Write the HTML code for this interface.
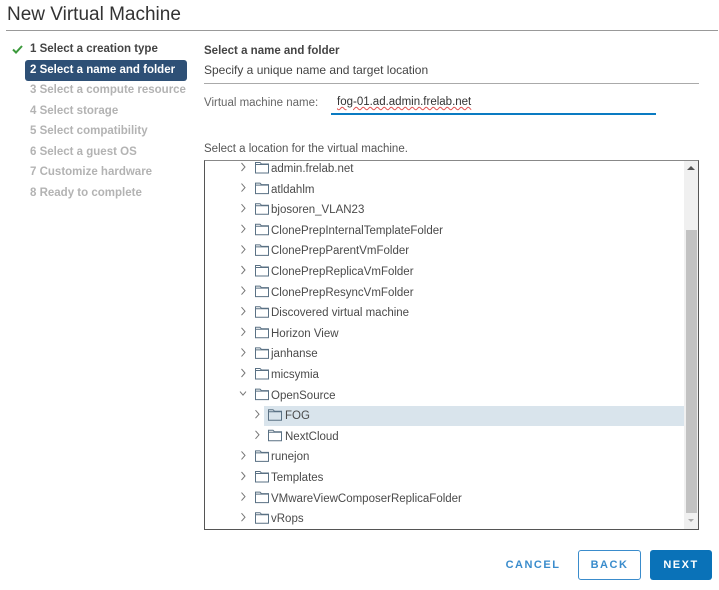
<html><head><style>
body{margin:0;width:719px;height:590px;background:#fff;font-family:"Liberation Sans",sans-serif;position:relative;overflow:hidden;color:#565656}
.a{position:absolute;white-space:nowrap}
.step{position:absolute;left:30px;font-size:11.5px;font-weight:bold;color:#b3b3b3}
.row{position:absolute;height:20px;font-size:11.5px;color:#4a4a4a;line-height:20px}
.btn{position:absolute;top:550px;height:30px;font-size:11px;font-weight:bold;letter-spacing:1.5px;line-height:30px;text-align:center;border-radius:3px}
</style></head><body>
<div class="a" style="left:7px;top:4px;font-size:19px;color:#333">New Virtual Machine</div>
<div class="a" style="left:6px;top:30px;width:712px;height:1px;background:#999"></div>
<svg class="a" style="left:12px;top:45px" width="11" height="9"><path d="M1 4.5L4 7.5L10 1" stroke="#3c9a3c" stroke-width="2" fill="none"/></svg>
<div class="step" style="top:43px;color:#444">1 Select a creation type</div>
<div class="a" style="left:25px;top:60px;width:162px;height:21px;background:#2e5076;border-radius:3px"></div>
<div class="step" style="top:64px;color:#fff">2 Select a name and folder</div>
<div class="step" style="top:84px">3 Select a compute resource</div>
<div class="step" style="top:105px">4 Select storage</div>
<div class="step" style="top:125px">5 Select compatibility</div>
<div class="step" style="top:146px">6 Select a guest OS</div>
<div class="step" style="top:166px">7 Customize hardware</div>
<div class="step" style="top:187px">8 Ready to complete</div>
<div class="a" style="left:204px;top:45px;font-size:11.5px;font-weight:bold;color:#444">Select a name and folder</div>
<div class="a" style="left:204px;top:63px;font-size:12px;color:#444">Specify a unique name and target location</div>
<div class="a" style="left:204px;top:83px;width:495px;height:1px;background:#aaa"></div>
<div class="a" style="left:204px;top:97px;font-size:11.5px;color:#666">Virtual machine name:</div>
<div class="a" style="left:337px;top:96px;font-size:11.5px;color:#333;text-decoration:underline wavy #e05050;text-decoration-thickness:1px">fog-01.ad.admin.frelab.net</div>
<div class="a" style="left:331px;top:113px;width:325px;height:2px;background:#0a7bc2"></div>
<div class="a" style="left:204px;top:143px;font-size:11.5px;color:#555">Select a location for the virtual machine.</div>
<div class="a" style="left:204px;top:160px;width:493px;height:368px;border:1px solid #555;border-top-color:#888;overflow:hidden">
<div class="a" style="left:479px;top:0;width:14px;height:368px;background:#f0f0f0"></div>
<div class="a" style="left:481px;top:69px;width:11px;height:283px;background:#c2c2c2"></div>
<div class="a" style="left:482px;top:5px;width:0;height:0;border:4px solid transparent;border-bottom:4px solid #555;border-top:0"></div>
<div class="a" style="left:483px;top:358px;width:0;height:0;border:3px solid transparent;border-top:3px solid #aaa;border-bottom:0"></div>
<div class="a" style="left:59px;top:245px;width:420px;height:20px;background:#d9e4ec"></div>
<svg class="a" style="left:0;top:0" width="480" height="368" fill="none" stroke="#777" stroke-width="1">
<g id="rows"></g>
</svg>
</div>
<div id="tree"></div>
<div class="btn" style="left:497px;width:72px;color:#3a8ccc">CANCEL</div>
<div class="btn" style="left:578px;width:61px;height:28px;line-height:28px;border:1px solid #3a8ccc;color:#3a8ccc">BACK</div>
<div class="btn" style="left:650px;width:62px;background:#0a72b8;color:#fff">NEXT</div>
<script>
var items=[["admin.frelab.net",0],["atldahlm",0],["bjosoren_VLAN23",0],["ClonePrepInternalTemplateFolder",0],["ClonePrepParentVmFolder",0],["ClonePrepReplicaVmFolder",0],["ClonePrepResyncVmFolder",0],["Discovered virtual machine",0],["Horizon View",0],["janhanse",0],["micsymia",0],["OpenSource",0,1],["FOG",1],["NextCloud",1],["runejon",0],["Templates",0],["VMwareViewComposerReplicaFolder",0],["vRops",0]];
var h="",s="";
items.forEach(function(it,i){var y=158+i*20.6;var cx=it[1]?257:243;var fx=it[1]?268:255;var tx=it[1]?285:271;
h+='<div class="row" style="left:'+tx+'px;top:'+(y+1)+'px">'+it[0]+'</div>';
var cy=y+10-162,c=cx-205,f=fx-205;
if(it[2])s+='<path d="M'+(c-3)+' '+(cy-2)+'L'+c+' '+(cy+1.5)+'L'+(c+3)+' '+(cy-2)+'"/>';
else s+='<path d="M'+(c-1.5)+' '+(cy-4)+'L'+(c+2)+' '+cy+'L'+(c-1.5)+' '+(cy+4)+'"/>';
s+='<path stroke="#5a7184" d="M'+(f+.5)+' '+(cy-4.5)+'h4.5l1.5 1.5h7v9h-13z M'+(f+.5)+' '+(cy-2.5)+'h13"/>';});
document.getElementById('tree').innerHTML=h;document.getElementById('rows').innerHTML=s;
</script>
</body></html>
